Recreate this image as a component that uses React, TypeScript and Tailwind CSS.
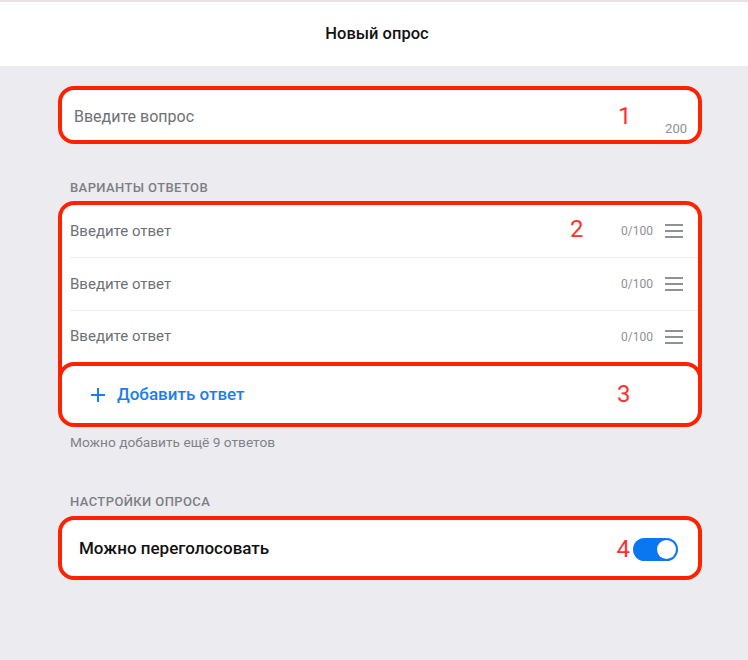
import React from 'react';

const red = 'border-[#ff2100]';

const Burger = () => (
    <svg width="18" height="14" viewBox="0 0 18 14" className="shrink-0">
        <rect x="0" y="0" width="18" height="2" fill="#8e9196" />
        <rect x="0" y="6" width="18" height="2" fill="#8e9196" />
        <rect x="0" y="12" width="18" height="2" fill="#8e9196" />
    </svg>
);

const AnswerRow = ({ last, mark }: { last?: boolean; mark?: string }) => (
    <div className={`pl-[8px] relative ${last ? 'h-[51px]' : 'h-[53px]'}`}>
        <div className={`h-full flex items-center pr-[15px] ${last ? '' : 'border-b border-[#ebecee]'}`}>
            <span className="text-[15px] text-[#6d7175] flex-1">Введите ответ</span>
            <span className="text-[12px] text-[#8c8f94] mr-[12px]">0/100</span>
            <Burger />
        </div>
        {mark && (
            <span className="absolute left-[508px] top-[9px] text-[24px] leading-[30px] text-[#ff2f2f]">{mark}</span>
        )}
    </div>
);

export default function App() {
    return (
        <div className="w-[748px] h-[660px] bg-[#ebebf0] font-['Roboto',sans-serif]">
            <div className="h-[66px] bg-white border-t-2 border-[#e8e2e8] flex items-center justify-center">
                <h1 className="text-[16.5px] font-medium text-[#111] pl-[6px]">Новый опрос</h1>
            </div>

            <div className="ml-[58px] w-[644px] pt-[20px]">
                <div className={`relative h-[58px] bg-white rounded-[16px] border-4 ${red} flex items-center pl-[12px] pt-[3px]`}>
                    <span className="text-[16px] text-[#6d7175]">Введите вопрос</span>
                    <span className="absolute left-[556px] top-[11px] text-[24px] leading-[30px] text-[#ff2f2f]">1</span>
                    <span className="absolute right-[11px] bottom-[2px] text-[13px] text-[#8c8f94]">200</span>
                </div>

                <div className="mt-[36px] pl-[12px] h-[16px] text-[13px] leading-[16px] font-medium tracking-[0.4px] text-[#7c7f84] uppercase">
                    Варианты ответов
                </div>

                <div className="mt-[5px]">
                    <div className={`bg-white border-4 border-b-0 ${red} rounded-t-[16px] pb-[16px]`}>
                        <AnswerRow mark="2" />
                        <AnswerRow />
                        <AnswerRow last />
                    </div>
                    <div className={`relative -mt-[16px] h-[65px] bg-white rounded-[16px] border-4 ${red} flex items-center pl-[29px] pt-[1px]`}>
                        <svg width="14" height="14" viewBox="0 0 14 14" className="mr-[12px]">
                            <rect x="6" y="0" width="2" height="14" fill="#1a7cf2" />
                            <rect x="0" y="6" width="14" height="2" fill="#1a7cf2" />
                        </svg>
                        <span className="text-[17px] font-medium text-[#1a7cf2]">Добавить ответ</span>
                        <span className="absolute left-[555px] top-[13px] text-[24px] leading-[30px] text-[#ff2f2f]">3</span>
                    </div>
                </div>

                <div className="mt-[7px] pl-[12px] text-[13.7px] leading-[16px] text-[#818388]">
                    Можно добавить ещё 9 ответов
                </div>

                <div className="mt-[44px] pl-[12px] h-[16px] text-[13px] leading-[16px] font-medium tracking-[0.4px] text-[#7c7f84] uppercase">
                    Настройки опроса
                </div>

                <div className={`mt-[6px] h-[64px] bg-white rounded-[16px] border-4 ${red} flex items-center pl-[17px] pr-[20px] pt-[2px]`}>
                    <span className="text-[17px] font-medium text-[#111] flex-1">Можно переголосовать</span>
                    <span className="text-[24px] leading-[30px] text-[#ff2f2f] mr-[3px]">4</span>
                    <div className="w-[45px] h-[23px] rounded-full bg-[#0a77f0] flex items-center justify-end pr-[2px]">
                        <div className="w-[19px] h-[19px] rounded-full bg-white" />
                    </div>
                </div>
            </div>
        </div>
    );
}
